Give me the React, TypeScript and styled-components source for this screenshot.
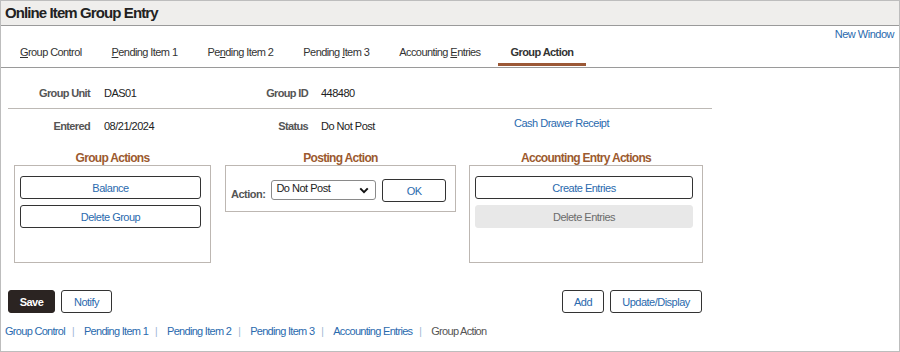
import styled, { createGlobalStyle } from "styled-components"

const GlobalStyle = createGlobalStyle`
  html, body {
    margin: 0;
    padding: 0;
    background: #ffffff;
  }
  body {
    font-family: "Liberation Sans", Arial, sans-serif;
    font-size: 11px;
    letter-spacing: -0.5px;
    color: #333;
  }
  button, select {
    letter-spacing: inherit;
  }
`;

const tabs = [
  { pre: "", key: "G", post: "roup Control" },
  { pre: "", key: "P", post: "ending Item 1" },
  { pre: "Pe", key: "n", post: "ding Item 2" },
  { pre: "Pending ", key: "I", post: "tem 3" },
  { pre: "Accounting ", key: "E", post: "ntries" },
];

const footerLinks = ["Group Control", "Pending Item 1", "Pending Item 2", "Pending Item 3", "Accounting Entries"];

export default function App() {
  return (
    <>
      <GlobalStyle />
      <Page>
        <TitleBar>Online Item Group Entry</TitleBar>
        <NewWindowRow>
          <Link>New Window</Link>
        </NewWindowRow>
        <TabBar>
          {tabs.map((t) => (
            <Tab key={t.post}>
              {t.pre}
              <u>{t.key}</u>
              {t.post}
            </Tab>
          ))}
          <Tab $active>Group Action</Tab>
        </TabBar>

        <Form>
          <FieldRow>
            <Label>Group Unit</Label>
            <Value>DAS01</Value>
            <Label $wide>Group ID</Label>
            <Value>448480</Value>
          </FieldRow>
          <Divider />
          <FieldRow>
            <Label>Entered</Label>
            <Value>08/21/2024</Value>
            <Label $wide>Status</Label>
            <Value>Do Not Post</Value>
            <SideLink>Cash Drawer Receipt</SideLink>
          </FieldRow>
        </Form>

        <Groups>
          <Group $width={197}>
            <GroupTitle>Group Actions</GroupTitle>
            <GroupBox $height={98}>
              <ActionButton>Balance</ActionButton>
              <ActionButton>Delete Group</ActionButton>
            </GroupBox>
          </Group>
          <Group $width={231}>
            <GroupTitle>Posting Action</GroupTitle>
            <GroupBox $height={47}>
              <PostingRow>
                <ActionLabel>Action:</ActionLabel>
                <SelectWrap>
                  <Select defaultValue="dnp">
                    <option value="dnp">Do Not Post</option>
                    <option value="post">Post</option>
                  </Select>
                  <Chevron viewBox="0 0 12 8">
                    <path d="M1.5 1.5 L6 6 L10.5 1.5" fill="none" stroke="#111" strokeWidth="2.4" />
                  </Chevron>
                </SelectWrap>
                <OkButton>OK</OkButton>
              </PostingRow>
            </GroupBox>
          </Group>
          <Group $width={234}>
            <GroupTitle>Accounting Entry Actions</GroupTitle>
            <GroupBox $height={98}>
              <ActionButton>Create Entries</ActionButton>
              <ActionButton disabled>Delete Entries</ActionButton>
            </GroupBox>
          </Group>
        </Groups>

        <Toolbar>
          <ButtonSet>
            <PrimaryButton>Save</PrimaryButton>
            <Button $w={51}>Notify</Button>
          </ButtonSet>
          <ButtonSet>
            <Button $w={42}>Add</Button>
            <Button $w={92}>Update/Display</Button>
          </ButtonSet>
        </Toolbar>

        <Footer>
          {footerLinks.map((l) => (
            <FooterItem key={l}>
              <FooterLink>{l}</FooterLink>
              <Sep>|</Sep>
            </FooterItem>
          ))}
          <Current>Group Action</Current>
        </Footer>
      </Page>
    </>
  )
}

const Page = styled.div`
  box-sizing: border-box;
  width: 900px;
  height: 352px;
  border: 1px solid #bdbdbd;
  display: flex;
  flex-direction: column;
`;

const TitleBar = styled.div`
  height: 24px;
  line-height: 24px;
  padding-left: 4px;
  background: #efeeec;
  border-bottom: 1px solid #9a9a9a;
  font-size: 15px;
  letter-spacing: -0.9px;
  font-weight: bold;
  color: #222;
`;

const NewWindowRow = styled.div`
  display: flex;
  justify-content: flex-end;
  padding: 2px 5px 0 0;
  height: 12px;
  line-height: 12px;
`;

const Link = styled.span`
  color: #2a6aae;
  font-size: 11px;
  cursor: pointer;
`;

const TabBar = styled.div`
  display: flex;
  gap: 4px;
  padding-left: 6px;
  margin-top: 3px;
  height: 24px;
  border-bottom: 1px solid #9a9a9a;
`;

const Tab = styled.div<{ $active?: boolean }>`
  padding: 0 13px;
  height: 23px;
  line-height: 18px;
  box-sizing: border-box;
  font-size: 11px;
  letter-spacing: -0.58px;
  color: #333;
  font-weight: ${(p) => (p.$active ? "bold" : "normal")};
  border-bottom: 3px solid ${(p) => (p.$active ? "#9b5836" : "transparent")};
  u {
    text-decoration: underline;
  }
`;

const Form = styled.div`
  padding: 18px 0 0 7px;
  width: 704px;
`;

const FieldRow = styled.div`
  display: flex;
  align-items: flex-start;
  height: 14px;
  line-height: 14px;
`;

const Label = styled.div<{ $wide?: boolean }>`
  width: ${(p) => (p.$wide ? "87px" : "82px")};
  margin-right: ${(p) => (p.$wide ? "13px" : "14px")};
  text-align: right;
  font-weight: bold;
  letter-spacing: -0.65px;
  color: #555;
  font-size: 11px;
`;

const Value = styled.div`
  width: 117px;
  color: #222;
  font-size: 11px;
`;

const SideLink = styled(Link)`
  margin-left: 76px;
  margin-top: -3px;
`;

const Divider = styled.div`
  height: 1px;
  background: #bdb9b5;
  margin: 8px 0 10px 0;
`;

const Groups = styled.div`
  display: flex;
  gap: 14px;
  padding-left: 13px;
  margin-top: 18px;
  align-items: flex-start;
`;

const Group = styled.div<{ $width: number }>`
  width: ${(p) => p.$width}px;
  display: flex;
  flex-direction: column;
  &:last-child {
    margin-left: -1px;
  }
`;

const GroupTitle = styled.div`
  text-align: center;
  font-size: 12px;
  letter-spacing: -0.7px;
  font-weight: bold;
  color: #9c5a2f;
  height: 14px;
  line-height: 14px;
`;

const GroupBox = styled.div<{ $height: number }>`
  box-sizing: border-box;
  height: ${(p) => p.$height}px;
  border: 1px solid #bdb7b2;
  padding: 10px 9px 0 5px;
  display: flex;
  flex-direction: column;
  gap: 6px;
`;

const ActionButton = styled.button`
  height: 23px;
  border-radius: 3px;
  border: 1px solid ${(p) => (p.disabled ? "#e8e8e8" : "#333")};
  background: ${(p) => (p.disabled ? "#e8e8e8" : "#fff")};
  color: ${(p) => (p.disabled ? "#6b6b6b" : "#2a6aae")};
  font-family: inherit;
  font-size: 11px;
  padding: 0;
`;

const PostingRow = styled.div`
  display: flex;
  align-items: center;
  gap: 6px;
  margin-top: 1px;
`;

const ActionLabel = styled.span`
  font-weight: bold;
  color: #555;
  font-size: 11px;
  margin-top: 8px;
`;

const SelectWrap = styled.div`
  position: relative;
  width: 107px;
  height: 20px;
`;

const Select = styled.select`
  appearance: none;
  box-sizing: border-box;
  width: 100%;
  height: 100%;
  border: 1px solid #8a8a8a;
  border-radius: 3px;
  background: #fff;
  font-family: inherit;
  font-size: 11px;
  color: #222;
  padding: 0 0 4px 4px;
`;

const Chevron = styled.svg`
  position: absolute;
  right: 7px;
  top: 7px;
  width: 10px;
  height: 7px;
  pointer-events: none;
`;

const OkButton = styled(ActionButton)`
  width: 65px;
  margin-top: 2px;
`;

const Toolbar = styled.div`
  display: flex;
  justify-content: space-between;
  width: 694px;
  padding-left: 7px;
  margin-top: 27px;
`;

const ButtonSet = styled.div`
  display: flex;
  gap: 6px;
`;

const Button = styled.button<{ $w: number }>`
  width: ${(p) => p.$w}px;
  height: 23px;
  border-radius: 3px;
  border: 1px solid #333;
  background: #fff;
  color: #2a6aae;
  font-family: inherit;
  font-size: 11px;
  padding: 0;
`;

const PrimaryButton = styled.button`
  width: 47px;
  height: 23px;
  border-radius: 3px;
  border: 1px solid #2b2422;
  background: #2b2422;
  color: #fff;
  font-weight: bold;
  font-family: inherit;
  font-size: 11px;
  padding: 0;
`;

const Footer = styled.div`
  display: flex;
  align-items: center;
  padding-left: 4px;
  margin-top: 11px;
  height: 14px;
  letter-spacing: -0.7px;
`;

const FooterItem = styled.span`
  display: flex;
  align-items: center;
`;

const FooterLink = styled(Link)`
  letter-spacing: -0.7px;
`;

const Sep = styled.span`
  color: #9bb5d3;
  margin: 0 10px 0 7px;
  font-size: 10px;
`;

const Current = styled.span`
  color: #555;
  font-size: 11px;
`;
